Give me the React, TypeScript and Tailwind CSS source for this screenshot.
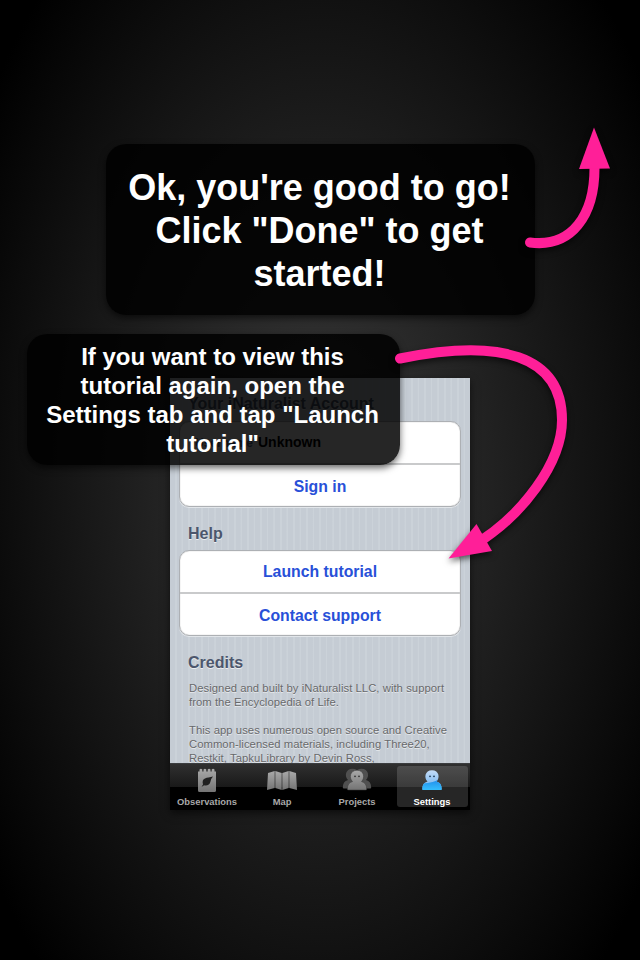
import React from "react";

function Callout({ className, children }: { className: string; children: React.ReactNode }) {
  return (
    <div className={`rounded-[20px] bg-black/85 text-center font-bold text-white shadow-[0_3px_7px_rgba(0,0,0,0.6)] ${className}`}>
      {children}
    </div>
  );
}

function Heading({ className, children }: { className: string; children: React.ReactNode }) {
  return (
    <h2 className={`pl-[18px] text-[16px] leading-[20px] font-bold text-[#4c566c] [text-shadow:0_1px_0_#ffffffb0] ${className}`}>
      {children}
    </h2>
  );
}

function Group({ children }: { children: React.ReactNode }) {
  return (
    <div className="mx-[9px] h-[86px] divide-y-2 divide-[#c9cacb] overflow-hidden rounded-[10px] border border-[#adb0b4] bg-white text-[16px] font-bold shadow-[inset_0_0_1px_#999,0_1px_0_#e2e6ea]">
      {children}
    </div>
  );
}

function Row({ children }: { children: React.ReactNode }) {
  return <div className="flex h-[43px] items-center justify-center pt-[1px] text-[15.800px] text-[#2850d8]">{children}</div>;
}

function Tab({ label, active = false, children }: { label: string; active?: boolean; children: React.ReactNode }) {
  return (
    <div
      className={`mx-[2px] flex h-[41px] min-w-0 flex-1 flex-col items-center justify-between rounded-[3px] pt-[1px] pr-[1px] ${
        active ? "bg-white/15 text-white" : "text-[#a8a8a8]"
      }`}
    >
      {children}
      <span className="text-[9.4px] leading-[11px] font-bold whitespace-nowrap">{label}</span>
    </div>
  );
}

function NotebookIcon() {
  return (
    <svg width="24" height="27" viewBox="0 0 24 27" className="block">
      <path d="M3 4.500H4.500V2.500Q6 0.800 7.300 2.500V4.500H8.500V2.500Q10 0.800 11.300 2.500V4.500H12.700V2.500Q14 0.800 15.500 2.500V4.500H16.700V2.500Q18 0.800 19.500 2.500V4.500H21V23.500Q21 25 19.500 25H4.500Q3 25 3 23.500Z" fill="url(#gray)" />
      <path d="M6.500 19.500Q7.500 18.500 8 17.500C6 10.500 12 11 18 9.500Q16 11.500 15.500 14.500C15 18 11.500 19.200 9 18.200Q8 19.500 6.500 19.500Z" fill="#202020" />
    </svg>
  );
}

function MapIcon() {
  return (
    <svg width="32" height="27" viewBox="0 0 32 27" className="block">
      <path d="M2 6L8.700 4V21L1 23ZM9.300 4L15.700 6V23L9.300 21ZM16.300 6L22.700 4V21L16.300 23ZM23.300 4L30 6L31 23L23.300 21Z" fill="url(#gray)" />
    </svg>
  );
}

const PERSON = "M9.500 14.600C5.800 11 6.800 3.300 14 3.300S22.200 11 18.500 14.600C22 15.500 23.700 18 23.700 22.200Q23.700 23 22.700 23H5.300Q4.300 23 4.300 22.200C4.300 18 6 15.500 9.500 14.600Z";

function Eyes({ color }: { color: string }) {
  return (
    <g fill={color}>
      <circle cx="12" cy="9.300" r="0.900" />
      <circle cx="16" cy="9.300" r="0.900" />
    </g>
  );
}

function PeopleIcon() {
  return (
    <svg width="30" height="27" viewBox="-1 0 30 27" className="block">
      <path d={PERSON} transform="translate(-4.500 -1.500)" fill="#505050" />
      <path d={PERSON} transform="translate(4.500 -1.500)" fill="#505050" />
      <path d={PERSON} fill="url(#gray)" stroke="#383838" strokeWidth="0.500" />
      <Eyes color="#333" />
    </svg>
  );
}

function PersonIcon() {
  return (
    <svg width="28" height="27" viewBox="0 0 28 27" className="block">
      <defs>
        <linearGradient id="pale" x1="0" y1="0" x2="0" y2="1">
          <stop stopColor="#c4dcf7" />
          <stop offset="1" stopColor="#66aef0" />
        </linearGradient>
        <linearGradient id="blue" x1="0" y1="0" x2="0" y2="1">
          <stop stopColor="#1e85e8" />
          <stop offset="1" stopColor="#37c3ff" />
        </linearGradient>
        <clipPath id="person"><path d={PERSON} /></clipPath>
      </defs>
      <path d={PERSON} fill="url(#pale)" />
      <path d="M3 16.500C12 16.500 17 14.500 24 11V24H3Z" fill="url(#blue)" clipPath="url(#person)" />
      <Eyes color="#1c3855" />
    </svg>
  );
}

function Arrows() {
  return (
    <svg width="640" height="960" viewBox="0 0 640 960" className="pointer-events-none absolute top-0 left-0 drop-shadow-[0_3px_3px_rgba(0,0,0,0.6)]">
      <g fill="none" stroke="#ff1f98" strokeWidth="10" strokeLinecap="round">
        <path d="M530 242.500C572 248 594.500 215 594.500 168" />
        <path d="M400 358.500C500 338 562 355 562 420C562 465 520 515 482 540" />
      </g>
      <g fill="#ff1f98">
        <path d="M594 127.500L610 168.500L579 169Z" />
        <path d="M448.500 558.500L476.500 524L492 551Z" />
      </g>
    </svg>
  );
}

export default function App() {
  return (
    <main className="relative h-[960px] w-[640px] overflow-hidden bg-[radial-gradient(ellipse_400px_680px_at_50%_50%,#3a3a3a_0%,#000_100%)] pt-[144px] font-['Liberation_Sans',Arial,sans-serif]">
      <svg width="0" height="0" className="absolute">
        <defs>
          <linearGradient id="gray" x1="0" y1="0" x2="0" y2="1">
            <stop stopColor="#a9a9a9" />
            <stop offset="1" stopColor="#747474" />
          </linearGradient>
        </defs>
      </svg>

      <Callout className="ml-[106px] h-[171px] w-[429px] pt-[22px] pr-[2px] text-[36px] leading-[43px]">
        <p className="whitespace-nowrap">Ok, you're good to go!</p>
        <p className="whitespace-nowrap">Click "Done" to get</p>
        <p>started!</p>
      </Callout>

      <section className="mt-[63px] ml-[170px] flex h-[432px] w-[300px] flex-col shadow-[0_3px_8px_rgba(0,0,0,0.6)]">
        <div className="h-[385px] overflow-hidden bg-[repeating-linear-gradient(90deg,#c5ccd4_0px,#c5ccd4_4.700px,#cbd2d9_5.200px,#cbd2d9_6.560px)] pt-[16px]">
          <Heading className="mb-[7px]">Your iNaturalist Account</Heading>
          <Group>
            <div className="flex h-[43px] items-center gap-[5px] text-[14px]">
              <span className="w-[73px] text-right text-[12px] text-[#516691]">Username</span>
              <span className="text-black">Unknown</span>
            </div>
            <Row>Sign in</Row>
          </Group>
          <Heading className="mt-[17px] mb-[6px]">Help</Heading>
          <Group>
            <Row>Launch tutorial</Row>
            <Row>Contact support</Row>
          </Group>
          <Heading className="mt-[17px] mb-[8px]">Credits</Heading>
          <div className="pl-[19px] text-[11.250px] leading-[14px] tracking-[0.060px] whitespace-nowrap text-[#68696b] [text-shadow:0_1px_0_#ffffff90]">
            <p>Designed and built by iNaturalist LLC, with support</p>
            <p>from the Encyclopedia of Life.</p>
            <p className="mt-[14px]">This app uses numerous open source and Creative</p>
            <p>Common-licensed materials, including Three20,</p>
            <p>Restkit, TapkuLibrary by Devin Ross,</p>
          </div>
        </div>
        <nav className="flex h-[47px] border-t border-[#3b3d3f] bg-[linear-gradient(#303030_0%,#191919_50%,#000_50%)] pt-[2px]">
          <Tab label="Observations"><NotebookIcon /></Tab>
          <Tab label="Map"><MapIcon /></Tab>
          <Tab label="Projects"><PeopleIcon /></Tab>
          <Tab label="Settings" active><PersonIcon /></Tab>
        </nav>
      </section>

      <Callout className="absolute top-[334px] left-[27px] h-[131px] w-[373px] pt-[8px] pr-[2px] text-[24px] leading-[29px]">
        <p>If you want to view this</p>
        <p>tutorial again, open the</p>
        <p className="whitespace-nowrap">Settings tab and tap "Launch</p>
        <p>tutorial"</p>
      </Callout>

      <Arrows />
    </main>
  );
}
